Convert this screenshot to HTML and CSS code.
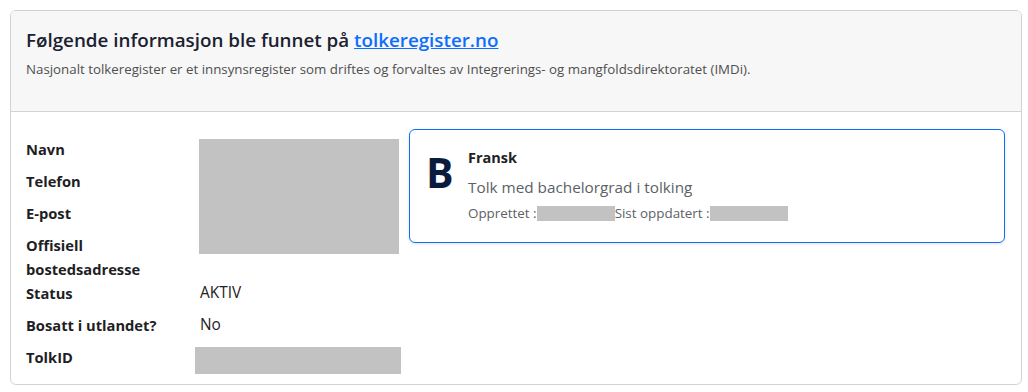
FILE: index.html
```html
<!DOCTYPE html>
<html lang="no">
<head>
<meta charset="utf-8">
<title>Tolkeregister</title>
<link rel="stylesheet" href="styles.css">
</head>
<body>
<div class="card">
  <div class="card-header">
    <h5 class="title">Følgende informasjon ble funnet på <a href="#" class="link">tolkeregister.no</a></h5>
    <p class="subtitle">Nasjonalt tolkeregister er et innsynsregister som driftes og forvaltes av Integrerings- og mangfoldsdirektoratet (IMDi).</p>
  </div>
  <div class="card-body">
    <div class="info">
      <div class="label">Navn</div>
      <div class="redact redact-big"></div>
      <div class="label">Telefon</div>
      <div class="label">E-post</div>
      <div class="label">Offisiell bostedsadresse</div>
      <div class="label">Status</div>
      <div class="value">AKTIV</div>
      <div class="label">Bosatt i utlandet?</div>
      <div class="value">No</div>
      <div class="label">TolkID</div>
      <div class="redact redact-id"></div>
    </div>
    <div class="qual">
      <div class="qual-letter">B</div>
      <div class="qual-text">
        <div class="qual-lang">Fransk</div>
        <div class="qual-desc">Tolk med bachelorgrad i tolking</div>
        <div class="qual-meta">Opprettet :<span class="redact redact-date"></span>Sist oppdatert : <span class="redact redact-date"></span></div>
      </div>
    </div>
  </div>
</div>
</body>
</html>
```
FILE: styles.css
```css
* { box-sizing: border-box; }
body {
  margin: 10px 6px 0 10px;
  font-family: "Open Sans", "Noto Sans", sans-serif;
  color: #212529;
  background: #fff;
}
.card {
  border: 1px solid #d3d3d3;
  border-radius: 6px;
  overflow: hidden;
}
.card-header {
  background: #f7f7f7;
  border-bottom: 1px solid #d3d3d3;
  padding: 17px 15px 16px 15px;
}
.title {
  margin: 0 0 8px 0;
  font-size: 18.8px;
  line-height: 24px;
  font-weight: 600;
  color: #1b2130;
}
.link {
  color: #0d6efd;
  text-decoration: underline;
}
.subtitle {
  margin: 0 0 16px 0;
  font-size: 13.3px;
  line-height: 19px;
  color: #4f4f4f;
}
.card-body {
  display: grid;
  grid-template-columns: 373px 596px;
  column-gap: 10px;
  padding: 17px 16px 7px 15px;
  align-items: start;
}
.info {
  display: grid;
  grid-template-columns: 173px 1fr;
  grid-auto-rows: minmax(32px, auto);
  padding-top: 8px;
  font-size: 14.7px;
  line-height: 24px;
}
.label {
  grid-column: 1;
  font-weight: 700;
  color: #1e1e24;
}
.value {
  grid-column: 2;
  color: #222;
  font-size: 15.4px;
  padding-left: 1px;
}
.redact { background: #c2c2c2; }
.redact-big {
  grid-column: 2;
  grid-row: 1 / span 4;
  height: 115px;
  width: 200px;
  margin-top: 2px;
}
.redact-id {
  grid-column: 2;
  height: 27px;
  width: 206px;
  margin: 2px 0 0 -4px;
}
.qual {
  display: flex;
  border: 1px solid #0d6efd;
  border-radius: 6px;
  box-shadow: 0 1px 3px rgba(0, 0, 0, 0.12);
  padding: 17px 16px 15px 16px;
  gap: 14px;
  height: 114px;
}
.qual-letter {
  width: 28px;
  font-size: 41px;
  line-height: 44px;
  font-weight: 700;
  color: #0b1b3d;
  padding-top: 3px;
}
.qual-text {
  display: flex;
  flex-direction: column;
}
.qual-lang {
  font-size: 14.5px;
  line-height: 22px;
  font-weight: 700;
  color: #222;
}
.qual-desc {
  margin-top: 6px;
  font-size: 15.3px;
  line-height: 24px;
  color: #5c5f66;
}
.qual-meta {
  margin-top: 5px;
  font-size: 13.4px;
  line-height: 19px;
  color: #5c5f66;
  display: flex;
  align-items: center;
}
.redact-date {
  display: inline-block;
  width: 78px;
  height: 15px;
}
```
